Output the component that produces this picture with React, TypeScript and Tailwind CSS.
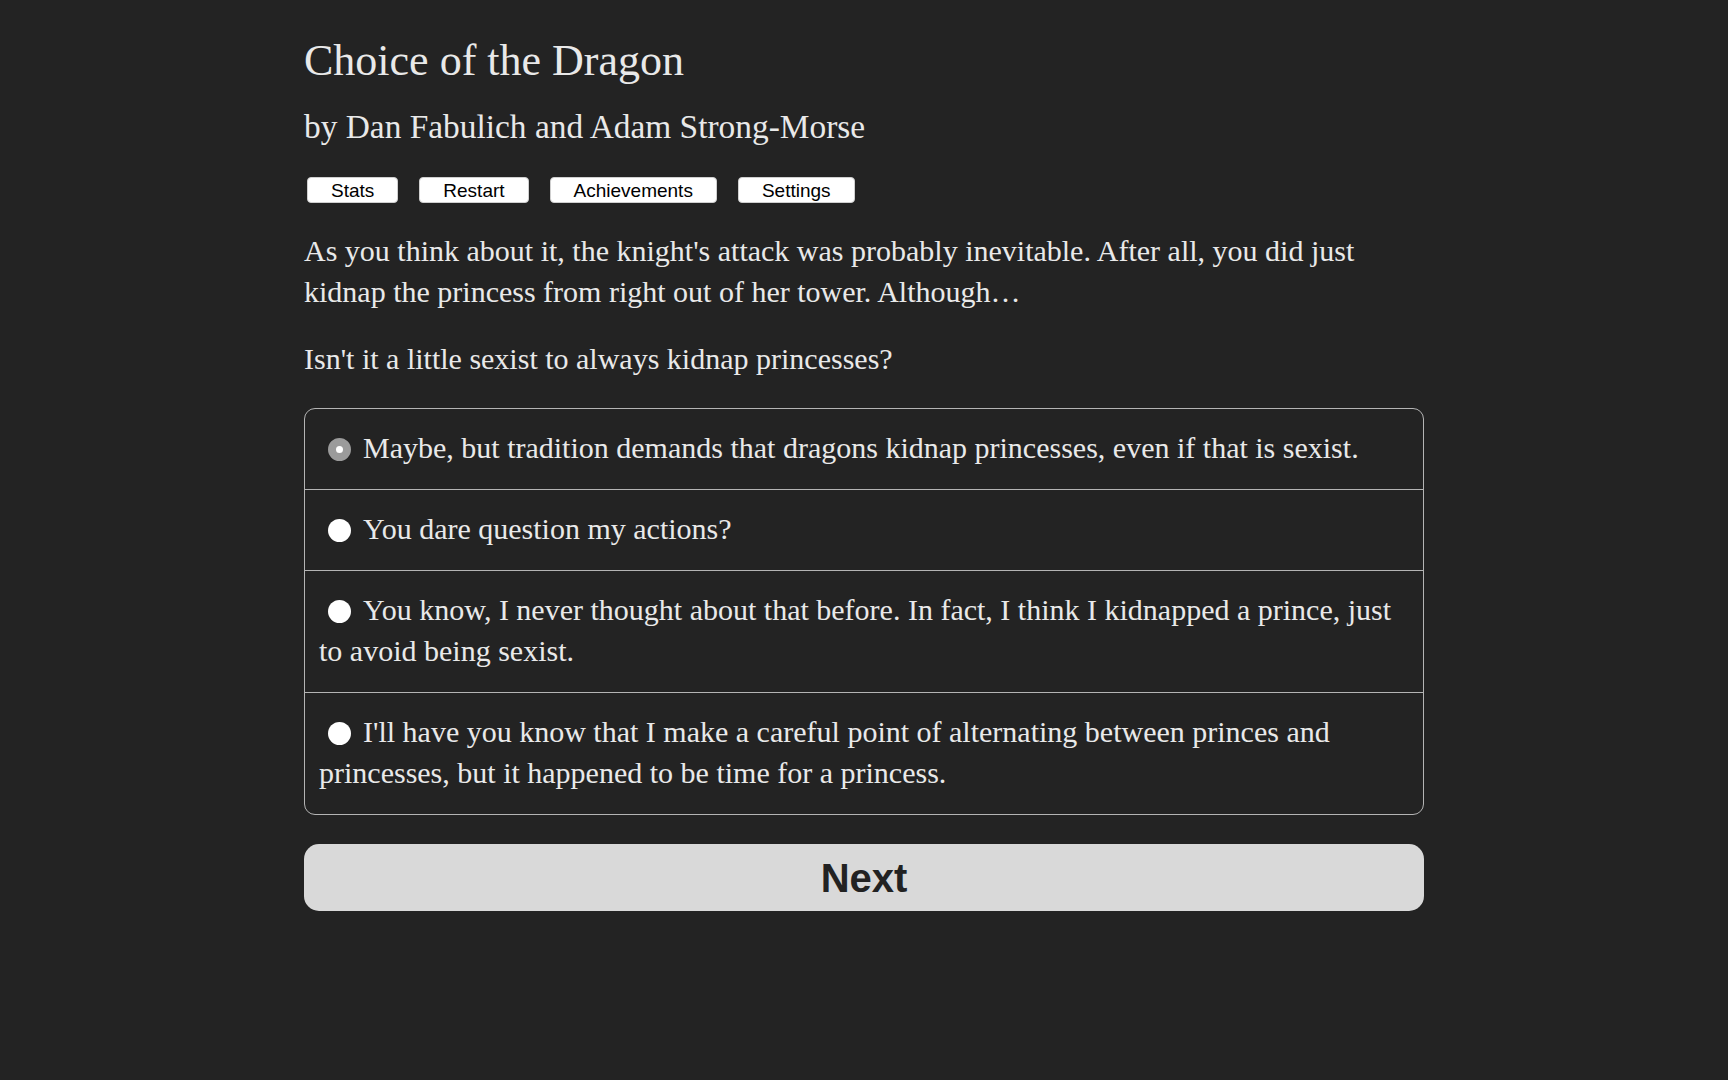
const serif = { fontFamily: '"Liberation Serif", "Times New Roman", serif' };
const sans = { fontFamily: '"Liberation Sans", Arial, sans-serif' };

const choices = [
    "Maybe, but tradition demands that dragons kidnap princesses, even if that is sexist.",
    "You dare question my actions?",
    "You know, I never thought about that before. In fact, I think I kidnapped a prince, just to avoid being sexist.",
    "I'll have you know that I make a careful point of alternating between princes and princesses, but it happened to be time for a princess.",
];

const menu = ["Stats", "Restart", "Achievements", "Settings"];

const Radio = ({ checked }: { checked: boolean }) => (
    <span
        className={`inline-block align-[-3px] w-[23px] h-[23px] rounded-full ml-[9px] mr-[12px] bg-white ${
            checked ? "border-[8.5px] border-[#9b9b9b]" : ""
        }`}
    />
);

export default function App() {
    return (
        <div className="min-h-screen bg-[#232323] text-[#e9e9e9]" style={serif}>
            <div className="w-[1120px] mx-auto pt-[34px] pb-20">
                <h1 className="text-[44px] leading-[53px]">Choice of the Dragon</h1>
                <h2 className="mt-[20px] text-[33.4px] leading-[40px]">
                    by Dan Fabulich and Adam Strong-Morse
                </h2>

                <div className="mt-[30px] flex gap-[21px] pl-[3px]">
                    {menu.map((m) => (
                        <button
                            key={m}
                            className="h-[26px] px-[23px] bg-white text-black rounded-[4px] border border-[#cfcfcf] text-[19px] leading-none"
                            style={sans}
                        >
                            {m}
                        </button>
                    ))}
                </div>

                <p className="mt-[27px] text-[30px] leading-[41px]">
                    As you think about it, the knight's attack was probably inevitable. After all, you did just kidnap the
                    princess from right out of her tower. Although…
                </p>
                <p className="mt-[26px] text-[30px] leading-[41px]">
                    Isn't it a little sexist to always kidnap princesses?
                </p>

                <div className="mt-[29px] border border-[#b4b4b4] rounded-[11px]">
                    {choices.map((c, i) => (
                        <div
                            key={i}
                            className={`px-[14px] pt-[17.5px] pb-[21.5px] text-[30px] leading-[41px] ${i > 0 ? "border-t border-[#b4b4b4]" : ""}`}
                        >
                            <Radio checked={i === 0} />
                            {c}
                        </div>
                    ))}
                </div>

                <button
                    className="mt-[29px] w-full h-[67px] rounded-[15px] bg-[#d9d9d9] text-[#222] text-[40px] font-bold"
                    style={sans}
                >
                    Next
                </button>
            </div>
        </div>
    );
}
